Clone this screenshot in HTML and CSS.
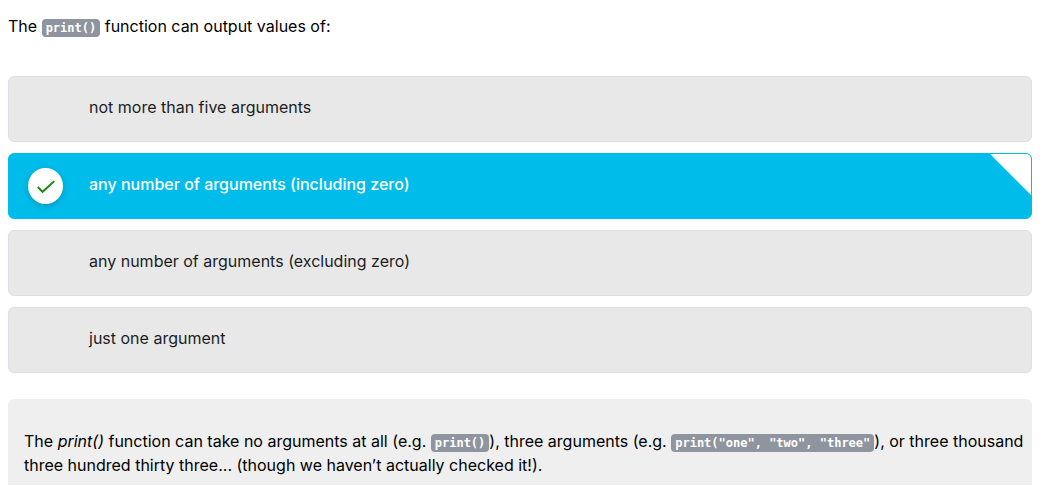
FILE: index.html
```html
<!DOCTYPE html>
<html lang="en">
<head>
<meta charset="utf-8">
<meta name="viewport" content="width=device-width, initial-scale=1">
<title>Quiz question</title>
<link rel="stylesheet" href="styles.css">
</head>
<body>
<main class="quiz">
  <form>
    <fieldset class="question">
      <legend class="prompt">The <code>print()</code> function can output values of:</legend>
      <div class="options">
        <label class="option">
          <span class="marker"><input class="radio" type="radio" name="answer"></span>
          <span class="text">not more than five arguments</span>
        </label>
        <label class="option selected">
          <span class="marker">
            <input class="radio" type="radio" name="answer" checked>
            <svg class="check" viewBox="0 0 36 36" aria-hidden="true"><path d="M10 19 L15 24 L27 13" fill="none" stroke="#168a0c" stroke-width="2"/></svg>
          </span>
          <span class="text">any number of arguments (including zero)</span>
        </label>
        <label class="option">
          <span class="marker"><input class="radio" type="radio" name="answer"></span>
          <span class="text">any number of arguments (excluding zero)</span>
        </label>
        <label class="option">
          <span class="marker"><input class="radio" type="radio" name="answer"></span>
          <span class="text">just one argument</span>
        </label>
      </div>
    </fieldset>
  </form>
  <section class="feedback">
    <p>The <em>print()</em> function can take no arguments at all (e.g. <code>print()</code>), three arguments (e.g. <code>print("one", "two", "three"</code>), or three thousand three hundred thirty three... (though we haven’t actually checked it!).</p>
  </section>
</main>
</body>
</html>
```
FILE: styles.css
```css
* {
  box-sizing: border-box;
}

body {
  margin: 0;
  background: #fff;
  color: #000;
  font: 16px/24px Inter, "Liberation Sans", sans-serif;
}

.quiz {
  padding: 14px 16px 12px 8px;
}

.question {
  min-width: 0;
  margin: 0;
  padding: 0;
  border: 0;
}

.prompt {
  padding: 0;
}

code {
  padding: 2px 4px;
  border-radius: 4px;
  background: #8f959f;
  color: #fff;
  font: bold 12px/14px "DejaVu Sans Mono", monospace;
}

.options {
  display: grid;
  gap: 11px;
  margin-top: 38px;
}

.option {
  display: flex;
  align-items: center;
  gap: 26px;
  position: relative;
  min-height: 66px;
  padding: 0 19px;
  border: 1px solid #dddfe8;
  border-radius: 6px;
  background: #e8e8e8;
  color: #1c1d1f;
}

.selected {
  border-color: #00bceb;
  background: #00bceb;
  color: #fff;
  font-weight: 500;
}

.selected::after {
  content: "";
  position: absolute;
  top: 0;
  right: 0;
  width: 41px;
  height: 41px;
  border-top-right-radius: 5px;
  background: #fff;
  clip-path: polygon(0 0, 100% 0, 100% 100%);
}

.marker {
  display: grid;
  flex: none;
  width: 35px;
  height: 36px;
}

.radio,
.check {
  grid-area: 1 / 1;
  width: 100%;
  height: 100%;
  margin: 0;
}

.radio {
  appearance: none;
  border-radius: 50%;
}

.radio:checked {
  background: #fff;
  box-shadow: 0 2px 6px rgba(0, 0, 0, 0.2);
}

.check {
  z-index: 1;
  pointer-events: none;
}

.text {
  padding-bottom: 4px;
}

.feedback {
  margin-top: 26px;
  padding: 30px 4px 8px 16px;
  border-radius: 6px 6px 0 0;
  background: #efefef;
}

.feedback p {
  margin: 0;
}
```
